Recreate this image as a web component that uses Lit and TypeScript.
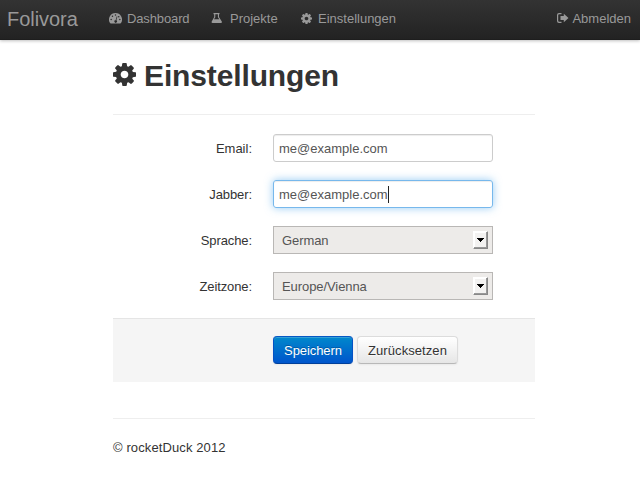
import { LitElement, html, css, svg } from "lit";
import { customElement } from "lit/decorators.js";

const cog = svg`<path fill-rule="evenodd" d="M1024 896q0 106-75 181t-181 75-181-75-75-181 75-181 181-75 181 75 75 181zm512-109v222q0 12-8 23t-20 13l-185 28q-19 54-39 91 35 50 107 138 10 12 10 25t-9 23q-27 37-99 108t-94 71q-12 0-26-9l-138-108q-44 23-91 38-16 136-29 186-7 28-36 28h-222q-14 0-24.500-8.500t-11.500-21.500l-28-184q-49-16-90-37l-141 107q-10 9-25 9-14 0-25-11-126-114-165-168-7-10-7-23 0-12 8-23 15-21 51-66.500t54-70.500q-27-50-41-99l-183-27q-13-2-21-12.500t-8-23.500v-222q0-12 8-23t19-13l186-28q14-46 39-92-40-57-107-138-10-12-10-24 0-10 9-23 26-36 98.500-107.500t94.500-71.500q13 0 26 10l138 107q44-23 91-38 16-136 29-186 7-28 36-28h222q14 0 24.500 8.500t11.500 21.500l28 184q49 16 90 37l142-107q9-9 24-9 13 0 25 10 129 119 165 170 7 8 7 22 0 12-8 23-15 21-51 66.500t-54 70.500q26 50 41 98l183 28q13 2 21 12.500t8 23.500z"/>`;

@customElement("app-root")
export class AppRoot extends LitElement {
  static styles = css`
    :host {
      display: block;
      height: 480px;
      overflow: hidden;
      background: #fff;
      color: #333;
      font: 13px/18px "Liberation Sans", Arial, sans-serif;
    }
    * { box-sizing: border-box; }
    svg { display: block; fill: currentColor; flex: none; }
    .navbar {
      height: 40px;
      display: flex;
      align-items: center;
      background: linear-gradient(#333, #222);
      box-shadow: 0 1px 3px rgba(0, 0, 0, 0.25), inset 0 -1px 0 rgba(0, 0, 0, 0.1);
      color: #999;
      padding: 0 9px 0 7px;
    }
    .brand { font-size: 20px; line-height: 20px; width: 102px; margin-top: -3px; letter-spacing: -0.05px; }
    .link { display: flex; align-items: center; white-space: nowrap; margin-top: -2px; height: 18px; }
    .link svg { margin-top: -1px; }
    .dash { width: 102px; gap: 5px; letter-spacing: -0.13px; }
    .flask { width: 90px; gap: 7px; }
    .settings { gap: 6px; }
    .logout { margin-left: auto; gap: 3px; }
    .page { width: 422px; margin: 0 0 0 113px; }
    h1 {
      margin: 0;
      height: 75px;
      border-bottom: 1px solid #eee;
      padding-top: 18px;
      display: flex;
      gap: 8px;
      font-size: 30px;
      line-height: 36px;
      letter-spacing: -0.13px;
    }
    h1 svg { margin-top: 5px; }
    .form { padding-top: 19px; display: grid; gap: 18px; }
    .row { display: flex; height: 28px; gap: 21px; }
    .row label { width: 139px; text-align: right; padding-top: 6px; }
    .row:nth-child(n + 2) label { letter-spacing: -0.1px; }
    .field {
      width: 220px;
      height: 28px;
      border: 1px solid #ccc;
      border-radius: 3px;
      padding: 6px 5px 4px;
      color: #555;
      box-shadow: inset 0 1px 1px rgba(0, 0, 0, 0.075);
      display: flex;
      align-items: center;
    }
    .focus {
      border-color: #77b8ec;
      box-shadow: inset 0 1px 1px rgba(0, 0, 0, 0.075), 0 0 8px rgba(82, 168, 236, 0.6);
    }
    .caret { width: 1px; height: 17px; background: #222; margin-top: -1px; }
    .select {
      background: #edebe9;
      border-color: #b9b7b5;
      border-radius: 0;
      box-shadow: none;
      justify-content: space-between;
      padding: 4px 4px 4px 8px;
    }
    .select .value { padding-top: 2px; letter-spacing: -0.08px; }
    .drop {
      width: 15px;
      height: 18px;
      background: #f3f2f1;
      border: 1px solid;
      border-color: #fff #888 #888 #fff;
      box-shadow: inset -1px -1px 0 #999, inset 1px 1px 0 #fff;
      display: flex;
      align-items: center;
      justify-content: center;
      color: #000;
    }
    .drop svg { margin-top: -1px; }
    .actions {
      margin-top: 18px;
      height: 64px;
      border-top: 1px solid #e5e5e5;
      background: #f5f5f5;
      padding: 17px 0 0 160px;
      display: flex;
      gap: 4px;
    }
    .btn {
      height: 28px;
      font: inherit;
      padding: 1px 0 0;
      border: 1px solid #ccc;
      border-color: #dcdcdc #dcdcdc #b8b8b8;
      border-radius: 4px;
      color: #333;
      background: linear-gradient(#fff, #e6e6e6);
      text-shadow: 0 1px 1px rgba(255, 255, 255, 0.75);
      box-shadow: inset 0 1px 0 rgba(255, 255, 255, 0.2), 0 1px 2px rgba(0, 0, 0, 0.05);
      width: 101px;
      letter-spacing: 0.08px;
    }
    .primary {
      width: 80px;
      color: #fff;
      background: linear-gradient(#0088cc, #0055cc);
      border-color: #0558c4 #0552c4 #003f99;
      text-shadow: 0 -1px 0 rgba(0, 0, 0, 0.25);
      letter-spacing: -0.08px;
    }
    footer { margin-top: 36px; border-top: 1px solid #eee; padding-top: 20px; letter-spacing: 0.11px; }
  `;

  private field(label: string, value: string, focused = false) {
    return html`<div class="row">
      <label>${label}</label>
      <div class="field ${focused ? "focus" : ""}"><span>${value}</span>${focused ? html`<i class="caret"></i>` : ""}</div>
    </div>`;
  }

  private select(label: string, value: string) {
    return html`<div class="row">
      <label>${label}</label>
      <div class="field select"><span class="value">${value}</span>
        <span class="drop"><svg width="7" height="4" viewBox="0 0 7 4" shape-rendering="crispEdges"><path d="M0 0h7v1H6v1H5v1H4v1H3V3H2V2H1V1H0z"/></svg></span>
      </div>
    </div>`;
  }

  render() {
    return html`
      <nav class="navbar">
        <div class="brand">Folivora</div>
        <div class="link dash">
          <svg width="13" height="11" viewBox="0 0 12 10"><path fill-rule="evenodd" d="M6 0a6 6 0 0 0-5.200 9q.3.600.9.600h8.600q.6 0 .9-.6A6 6 0 0 0 6 0zM2 5.300a.7.7 0 1 1 0 1.400.7.700 0 0 1 0-1.400zM3.200 2.300a.7.7 0 1 1 0 1.400.7.700 0 0 1 0-1.400zM6 1a.7.7 0 1 1 0 1.400A.7.7 0 0 1 6 1zM7.200 3l.6.200-1 3.500a1.200 1.200 0 1 1-.7-.2zM9 2.600a.7.7 0 1 1 0 1.400.7.700 0 0 1 0-1.400zM10 5.300a.7.7 0 1 1 0 1.400.7.700 0 0 1 0-1.400z"/></svg>
          <span>Dashboard</span>
        </div>
        <div class="link flask">
          <svg width="12" height="11" viewBox="0 0 12 11"><path fill-rule="evenodd" d="M2.500 0h6v1.200H8V4l2.800 4.600Q11.500 10 10 10H1.500Q0 10 .7 8.600L3.200 4V1.200h-.7zM4.300 1.200v3L3 6.300h5.300L6.900 4.200v-3z"/></svg>
          <span>Projekte</span>
        </div>
        <div class="link settings">
          <svg width="11" height="11" viewBox="0 128 1536 1536">${cog}</svg>
          <span>Einstellungen</span>
        </div>
        <div class="link logout">
          <svg width="12" height="11" viewBox="0 0 12 11"><path d="M4.500 0v1.200H2.200q-1 0-1 1v5.600q0 1 1 1h2.300V10H2Q0 10 0 8V2Q0 0 2 0zM6.800.7 11.500 5 6.800 9.300V7H3.500V3h3.300z"/></svg>
          <span>Abmelden</span>
        </div>
      </nav>
      <main class="page">
        <h1><svg width="23" height="23" viewBox="0 128 1536 1536">${cog}</svg><span>Einstellungen</span></h1>
        <div class="form">
          ${this.field("Email:", "me@example.com")}
          ${this.field("Jabber:", "me@example.com", true)}
          ${this.select("Sprache:", "German")}
          ${this.select("Zeitzone:", "Europe/Vienna")}
        </div>
        <div class="actions">
          <button class="btn primary">Speichern</button>
          <button class="btn">Zurücksetzen</button>
        </div>
        <footer>© rocketDuck 2012</footer>
      </main>
    `;
  }
}
